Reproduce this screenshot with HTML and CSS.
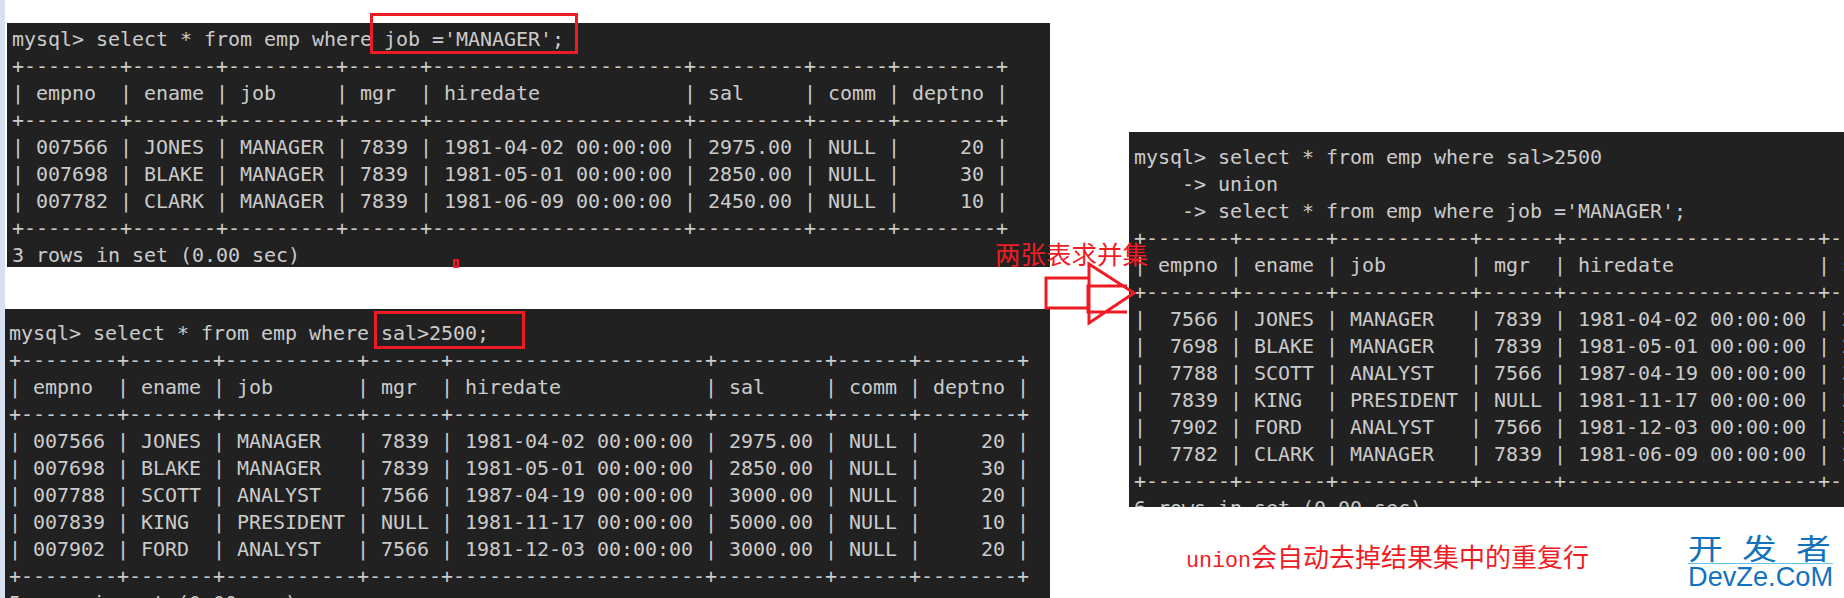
FILE: index.html
```html
<!DOCTYPE html>
<html lang="zh">
<head>
<meta charset="utf-8">
<title>union</title>
<link rel="stylesheet" href="styles.css">
</head>
<body>
<div class="canvas">
<div class="strip"></div>
<pre class="term term-a">mysql&gt; select * from emp where job ='MANAGER';
+--------+-------+---------+------+---------------------+---------+------+--------+
| empno  | ename | job     | mgr  | hiredate            | sal     | comm | deptno |
+--------+-------+---------+------+---------------------+---------+------+--------+
| 007566 | JONES | MANAGER | 7839 | 1981-04-02 00:00:00 | 2975.00 | NULL |     20 |
| 007698 | BLAKE | MANAGER | 7839 | 1981-05-01 00:00:00 | 2850.00 | NULL |     30 |
| 007782 | CLARK | MANAGER | 7839 | 1981-06-09 00:00:00 | 2450.00 | NULL |     10 |
+--------+-------+---------+------+---------------------+---------+------+--------+
3 rows in set (0.00 sec)</pre>
<pre class="term term-b">mysql&gt; select * from emp where sal&gt;2500;
+--------+-------+-----------+------+---------------------+---------+------+--------+
| empno  | ename | job       | mgr  | hiredate            | sal     | comm | deptno |
+--------+-------+-----------+------+---------------------+---------+------+--------+
| 007566 | JONES | MANAGER   | 7839 | 1981-04-02 00:00:00 | 2975.00 | NULL |     20 |
| 007698 | BLAKE | MANAGER   | 7839 | 1981-05-01 00:00:00 | 2850.00 | NULL |     30 |
| 007788 | SCOTT | ANALYST   | 7566 | 1987-04-19 00:00:00 | 3000.00 | NULL |     20 |
| 007839 | KING  | PRESIDENT | NULL | 1981-11-17 00:00:00 | 5000.00 | NULL |     10 |
| 007902 | FORD  | ANALYST   | 7566 | 1981-12-03 00:00:00 | 3000.00 | NULL |     20 |
+--------+-------+-----------+------+---------------------+---------+------+--------+
5 rows in set (0.00 sec)</pre>
<pre class="term term-c">mysql&gt; select * from emp where sal&gt;2500
    -&gt; union
    -&gt; select * from emp where job ='MANAGER';
+-------+-------+-----------+------+---------------------+---------+------+--------+
| empno | ename | job       | mgr  | hiredate            | sal     | comm | deptno |
+-------+-------+-----------+------+---------------------+---------+------+--------+
|  7566 | JONES | MANAGER   | 7839 | 1981-04-02 00:00:00 | 2975.00 | NULL |     20 |
|  7698 | BLAKE | MANAGER   | 7839 | 1981-05-01 00:00:00 | 2850.00 | NULL |     30 |
|  7788 | SCOTT | ANALYST   | 7566 | 1987-04-19 00:00:00 | 3000.00 | NULL |     20 |
|  7839 | KING  | PRESIDENT | NULL | 1981-11-17 00:00:00 | 5000.00 | NULL |     10 |
|  7902 | FORD  | ANALYST   | 7566 | 1981-12-03 00:00:00 | 3000.00 | NULL |     20 |
|  7782 | CLARK | MANAGER   | 7839 | 1981-06-09 00:00:00 | 2450.00 | NULL |     10 |
+-------+-------+-----------+------+---------------------+---------+------+--------+
6 rows in set (0.00 sec)</pre>
<div class="box box-a"></div>
<div class="box box-b"></div>
<div class="dot"></div>
<svg class="arrow" width="100" height="70" viewBox="1040 260 100 70" aria-hidden="true">
<path d="M1127 286H1088V312H1127M1089 278H1046V308H1089M1089 264L1134 293L1089 323Z"/>
</svg>
<div class="note note-a">两张表求并集</div>
<div class="note note-b"><span class="latin">union</span>会自动去掉结果集中的重复行</div>
<div class="logo">
<div class="logo-cn"><span class="logo-cn-text">开 发 者</span></div>
<div class="logo-en">DevZe.CoM</div>
</div>
</div>
</body>
</html>
```
FILE: styles.css
```css
html, body {
  margin: 0;
  padding: 0;
  background: #fff;
  overflow: hidden;
}
.canvas {
  position: relative;
  width: 1844px;
  height: 598px;
  overflow: hidden;
}
.strip {
  position: absolute;
  left: 0;
  top: 0;
  width: 5px;
  height: 598px;
  background: #d6e0ef;
}
.term {
  position: absolute;
  margin: 0;
  background: #212121;
  color: #cbcbcb;
  font-family: "DejaVu Sans Mono", monospace;
  font-size: 20px;
  letter-spacing: -0.04px;
  line-height: 27px;
  overflow: hidden;
  white-space: pre;
  box-sizing: border-box;
}
.term-a {
  left: 7px;
  top: 23px;
  width: 1043px;
  height: 244px;
  padding: 3px 0 0 5px;
}
.term-b {
  left: 5px;
  top: 309px;
  width: 1045px;
  height: 289px;
  padding: 11px 0 0 4px;
}
.term-c {
  left: 1129px;
  top: 132px;
  width: 715px;
  height: 375px;
  padding: 12px 0 0 5px;
}
.box {
  position: absolute;
  box-sizing: border-box;
  border: 3px solid #ed1c24;
}
.box-a {
  left: 370px;
  top: 13px;
  width: 208px;
  height: 41px;
}
.box-b {
  left: 374px;
  top: 311px;
  width: 151px;
  height: 38px;
}
.dot {
  position: absolute;
  box-sizing: border-box;
  left: 453px;
  top: 259px;
  width: 6px;
  height: 9px;
  border: 2px solid #ed1c24;
  background: #7a1a1e;
}
.arrow {
  position: absolute;
  left: 1040px;
  top: 260px;
}
.arrow path {
  fill: none;
  stroke: #ed1c24;
  stroke-width: 3;
}
.note {
  position: absolute;
  color: #f01c24;
  font-family: "Noto Sans CJK SC", sans-serif;
  white-space: nowrap;
}
.note-a {
  left: 995px;
  top: 236px;
  font-size: 25.5px;
  line-height: 34px;
  font-weight: 400;
}
.note-b {
  left: 1186px;
  top: 540px;
  font-size: 26px;
  line-height: 32px;
  font-weight: 400;
}
.latin {
  font-family: "Liberation Mono", monospace;
  font-size: 21.7px;
}
.logo {
  position: absolute;
  left: 1688px;
  top: 531px;
  width: 145px;
  color: #1272bd;
}
.logo-cn {
  height: 32px;
  border-bottom: 1px solid #6cc4e8;
}
.logo-cn-text {
  display: inline-block;
  font-family: "Noto Sans CJK SC", sans-serif;
  font-size: 29px;
  line-height: 32px;
  word-spacing: 9.5px;
  white-space: nowrap;
  transform: scaleX(1.2);
  transform-origin: left center;
}
.logo-en {
  font-family: "Liberation Sans", sans-serif;
  font-size: 27.2px;
  line-height: 25px;
  white-space: nowrap;
}
```
